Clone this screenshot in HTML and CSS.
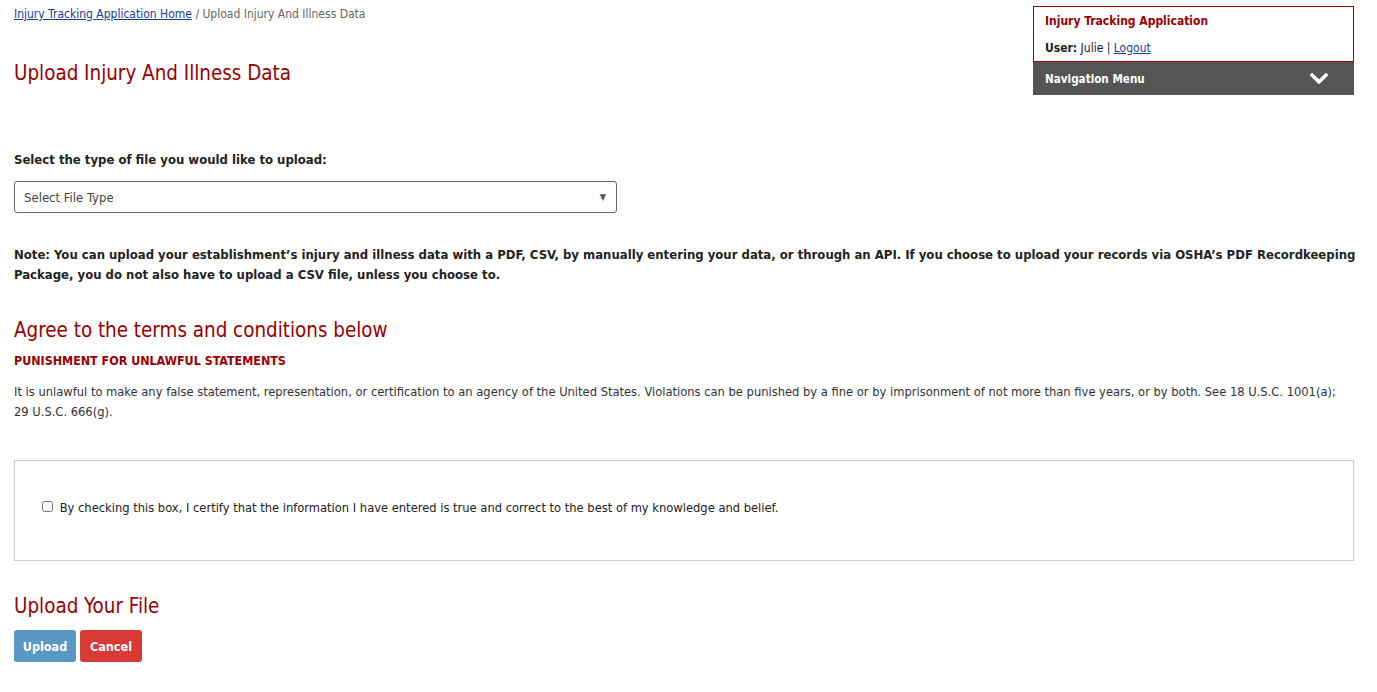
FILE: index.html
```html
<!DOCTYPE html>
<html lang="en">
<head>
  <meta charset="UTF-8" />
  <meta name="viewport" content="width=device-width, initial-scale=1.0" />
  <title>Upload Injury And Illness Data</title>
  <link rel="stylesheet" href="styles.css">
</head>
<body>
  <div class="page">
    <div class="top">
      <div class="top-left">
        <div class="breadcrumb">
          <a href="#">Injury Tracking Application Home</a> / Upload Injury And Illness Data
        </div>
        <h1>Upload Injury And Illness Data</h1>
      </div>
      <div class="app-panel">
        <div class="app-info">
          <div class="app-name">Injury Tracking Application</div>
          <div class="app-user"><strong>User:</strong> Julie | <a href="#">Logout</a></div>
        </div>
        <div class="nav-menu">
          <span>Navigation Menu</span>
          <svg class="chevron" width="18" height="14" viewBox="0 0 18 14">
            <path d="M2 3 L9 10 L16 3" fill="none" stroke="#fff" stroke-width="3.6" stroke-linecap="round" stroke-linejoin="round"/>
          </svg>
        </div>
      </div>
    </div>

    <label class="field-label" for="file-type">Select the type of file you would like to upload:</label>
    <div class="select-box">
      <span>Select File Type</span>
      <span class="caret">&#9660;</span>
    </div>

    <p class="note">Note: You can upload your establishment’s injury and illness data with a PDF, CSV, by manually entering your data, or through an API. If you choose to upload your records via OSHA’s PDF Recordkeeping Package, you do not also have to upload a CSV file, unless you choose to.</p>

    <h2>Agree to the terms and conditions below</h2>
    <div class="warning">PUNISHMENT FOR UNLAWFUL STATEMENTS</div>
    <p class="legal">It is unlawful to make any false statement, representation, or certification to an agency of the United States. Violations can be punished by a fine or by imprisonment of not more than five years, or by both. See 18 U.S.C. 1001(a); 29 U.S.C. 666(g).</p>

    <div class="certify">
      <label><input type="checkbox" /> By checking this box, I certify that the information I have entered is true and correct to the best of my knowledge and belief.</label>
    </div>

    <h2 class="upload-title">Upload Your File</h2>
    <div class="buttons">
      <button class="btn btn-upload">Upload</button>
      <button class="btn btn-cancel">Cancel</button>
    </div>
  </div>
</body>
</html>
```

FILE: styles.css
```css
* {
  box-sizing: border-box;
}
body {
  margin: 0;
  font-family: "DejaVu Sans Condensed", "DejaVu Sans", sans-serif;
  font-size: 12px;
  color: #222;
  background: #fff;
}
.page {
  padding: 6px 23px 20px 14px;
}
.top {
  display: flex;
  justify-content: space-between;
  align-items: flex-start;
}
.breadcrumb {
  color: #666;
  padding-top: 1px;
}
.breadcrumb a {
  color: #1a3d8f;
}
h1, h2 {
  font-weight: normal;
  color: #990000;
  font-size: 20.4px;
  margin: 0;
}
h1 {
  margin-top: 40px;
}
.app-panel {
  width: 321px;
}
.app-info {
  border: 1px solid #990000;
  padding: 7px 11px 5px;
  line-height: 15px;
}
.app-name {
  color: #990000;
  font-weight: bold;
  margin-bottom: 12px;
}
.app-user a {
  color: #1a3d8f;
}
.nav-menu {
  background: #555;
  color: #fff;
  font-weight: bold;
  font-size: 11.6px;
  height: 33px;
  display: flex;
  align-items: center;
  justify-content: space-between;
  padding: 1px 26px 0 12px;
}
.field-label {
  display: block;
  font-weight: bold;
  font-size: 13px;
  margin-top: 57px;
}
.select-box {
  width: 603px;
  height: 32px;
  margin-top: 14px;
  border: 1px solid #666;
  border-radius: 3px;
  display: flex;
  justify-content: space-between;
  align-items: center;
  padding: 0 10px 0 9px;
  color: #444;
  font-size: 13px;
}
.caret {
  font-size: 9px;
  color: #555;
}
.note {
  font-weight: bold;
  font-size: 13px;
  line-height: 20px;
  margin: 32px -14px 0 0;
}
h2 {
  margin-top: 33px;
}
.warning {
  color: #990000;
  font-weight: bold;
  font-size: 12.4px;
  margin-top: 11px;
}
.legal {
  color: #333;
  font-size: 12.8px;
  line-height: 20px;
  margin: 14px 0 0;
}
.certify {
  border: 1px solid #ccc;
  height: 101px;
  margin-top: 38px;
  display: flex;
  align-items: center;
  padding: 0 26px 6px;
  font-size: 12.8px;
}
.certify input {
  width: 11px;
  height: 11px;
  margin: 0 3px 0 1px;
  vertical-align: 0;
}
.upload-title {
  margin-top: 33px;
}
.buttons {
  display: flex;
  gap: 4px;
  margin-top: 12px;
}
.btn {
  width: 62px;
  height: 32px;
  border: none;
  border-radius: 3px;
  color: #fff;
  font-family: inherit;
  font-weight: bold;
  font-size: 12.5px;
}
.btn-upload {
  background: #5b97c3;
}
.btn-cancel {
  background: #d83a35;
}
```
